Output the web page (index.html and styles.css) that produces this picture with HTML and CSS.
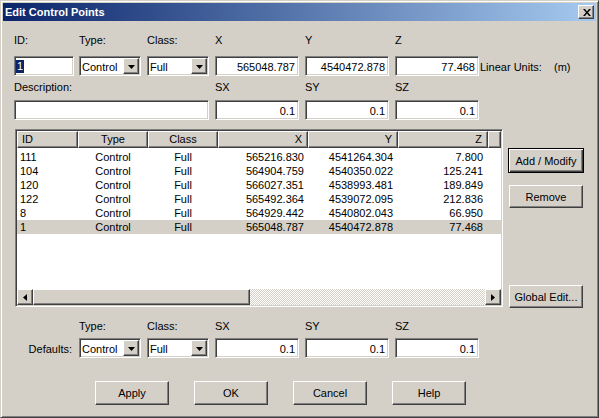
FILE: index.html
```html
<!DOCTYPE html>
<html>
<head>
<meta charset="utf-8">
<title>Edit Control Points</title>
<link rel="stylesheet" href="styles.css">
</head>
<body>
<div class="window">
  <div class="titlebar">
    <span class="title">Edit Control Points</span>
    <div class="close btn"><svg width="8" height="7" viewBox="0 0 8 7"><path d="M0 0h2l2 2.4 2-2.4h2l-3 3.5 3 3.5h-2l-2-2.4-2 2.4h-2l3-3.5z" fill="#000"/></svg></div>
  </div>
  <div class="content">
    <div class="grid form">
      <div class="lbl">ID:</div>
      <div class="lbl">Type:</div>
      <div class="lbl">Class:</div>
      <div class="lbl">X</div>
      <div class="lbl">Y</div>
      <div class="lbl">Z</div>
      <div></div>

      <div class="field w-id"><span class="sel">1</span></div>
      <div class="field combo"><span class="ctext">Control</span><span class="drop btn"><svg width="7" height="4" viewBox="0 0 7 4"><path d="M0 0h7l-3.5 4z" fill="#000"/></svg></span></div>
      <div class="field combo"><span class="ctext">Full</span><span class="drop btn"><svg width="7" height="4" viewBox="0 0 7 4"><path d="M0 0h7l-3.5 4z" fill="#000"/></svg></span></div>
      <div class="field num">565048.787</div>
      <div class="field num">4540472.878</div>
      <div class="field num">77.468</div>
      <div class="units"><span class="ulabel">Linear Units:</span><span>(m)</span></div>

      <div class="lbl lbl2 span3">Description:</div>
      <div class="lbl lbl2">SX</div>
      <div class="lbl lbl2">SY</div>
      <div class="lbl lbl2">SZ</div>
      <div></div>

      <div class="field w-desc span3"></div>
      <div class="field num">0.1</div>
      <div class="field num">0.1</div>
      <div class="field num">0.1</div>
      <div></div>
    </div>

    <div class="middle">
      <div class="list">
        <div class="lhead">
          <div class="hcell c-id">ID</div>
          <div class="hcell c-type">Type</div>
          <div class="hcell c-class">Class</div>
          <div class="hcell c-n">X</div>
          <div class="hcell c-n">Y</div>
          <div class="hcell c-n">Z</div>
          <div class="hcell c-rest"></div>
        </div>
        <div class="rows">
          <div class="row"><span class="c-id">111</span><span class="c-type">Control</span><span class="c-class">Full</span><span class="c-n cx">565216.830</span><span class="c-n">4541264.304</span><span class="c-n">7.800</span></div>
          <div class="row"><span class="c-id">104</span><span class="c-type">Control</span><span class="c-class">Full</span><span class="c-n cx">564904.759</span><span class="c-n">4540350.022</span><span class="c-n">125.241</span></div>
          <div class="row"><span class="c-id">120</span><span class="c-type">Control</span><span class="c-class">Full</span><span class="c-n cx">566027.351</span><span class="c-n">4538993.481</span><span class="c-n">189.849</span></div>
          <div class="row"><span class="c-id">122</span><span class="c-type">Control</span><span class="c-class">Full</span><span class="c-n cx">565492.364</span><span class="c-n">4539072.095</span><span class="c-n">212.836</span></div>
          <div class="row"><span class="c-id">8</span><span class="c-type">Control</span><span class="c-class">Full</span><span class="c-n cx">564929.442</span><span class="c-n">4540802.043</span><span class="c-n">66.950</span></div>
          <div class="row selected"><span class="c-id">1</span><span class="c-type">Control</span><span class="c-class">Full</span><span class="c-n cx">565048.787</span><span class="c-n">4540472.878</span><span class="c-n">77.468</span></div>
        </div>
        <div class="hscroll">
          <div class="arrow btn"><svg width="4" height="7" viewBox="0 0 4 7"><path d="M4 0v7l-4-3.5z" fill="#000"/></svg></div>
          <div class="thumb btn"></div>
          <div class="track"></div>
          <div class="arrow btn"><svg width="4" height="7" viewBox="0 0 4 7"><path d="M0 0v7l4-3.5z" fill="#000"/></svg></div>
        </div>
      </div>
      <div class="side">
        <div class="btn pbtn default">Add / Modify</div>
        <div class="btn pbtn side-btn remove">Remove</div>
        <div class="btn pbtn side-btn global">Global Edit...</div>
      </div>
    </div>

    <div class="grid defaults">
      <div></div>
      <div class="lbl">Type:</div>
      <div class="lbl">Class:</div>
      <div class="lbl">SX</div>
      <div class="lbl">SY</div>
      <div class="lbl">SZ</div>
      <div></div>

      <div class="dlabel">Defaults:</div>
      <div class="field combo"><span class="ctext">Control</span><span class="drop btn"><svg width="7" height="4" viewBox="0 0 7 4"><path d="M0 0h7l-3.5 4z" fill="#000"/></svg></span></div>
      <div class="field combo"><span class="ctext">Full</span><span class="drop btn"><svg width="7" height="4" viewBox="0 0 7 4"><path d="M0 0h7l-3.5 4z" fill="#000"/></svg></span></div>
      <div class="field num">0.1</div>
      <div class="field num">0.1</div>
      <div class="field num">0.1</div>
      <div></div>
    </div>

    <div class="actions">
      <div class="btn pbtn act">Apply</div>
      <div class="btn pbtn act">OK</div>
      <div class="btn pbtn act">Cancel</div>
      <div class="btn pbtn act">Help</div>
    </div>
  </div>
</div>
</body>
</html>
```

FILE: styles.css
```css
* { box-sizing: border-box; }

body {
  margin: 0;
  font: 11px "Liberation Sans", Arial, sans-serif;
  color: #000;
  background: #D4D0C8;
}

.window {
  width: 599px;
  height: 418px;
  border: 1px solid;
  border-color: #D4D0C8 #404040 #404040 #D4D0C8;
  box-shadow: inset 1px 1px #fff, inset -1px -1px #808080;
  padding: 2px;
  background: #D4D0C8;
  display: flex;
  flex-direction: column;
}

.titlebar {
  height: 18px;
  flex: none;
  background: linear-gradient(to right, #0A246A, #A6CAF0);
  display: flex;
  align-items: center;
  justify-content: space-between;
  padding: 0 2px 0 2px;
}

.title {
  color: #fff;
  font-weight: bold;
  line-height: 18px;
}

.btn {
  background: #D4D0C8;
  border: 1px solid;
  border-color: #fff #404040 #404040 #fff;
  box-shadow: inset -1px -1px #808080;
}

.close {
  width: 16px;
  height: 14px;
  display: flex;
  align-items: center;
  justify-content: center;
  padding-left: 1px;
}

.content {
  padding: 13px 0 0 11px;
}

.grid {
  display: grid;
  grid-template-columns: 65px 68px 68px 90px 90px 85px 1fr;
}

.form {
  grid-template-rows: 22px 20px 24px 20px;
}

.lbl {
  line-height: 13px;
  white-space: nowrap;
}

.lbl2 {
  padding-top: 5px;
}

.span3 {
  grid-column: span 3;
}

.field {
  height: 20px;
  background: #fff;
  border: 1px solid;
  border-color: #808080 #fff #fff #808080;
  box-shadow: inset 1px 1px #404040, inset -1px -1px #D4D0C8;
  padding: 2px 3px 0 3px;
  line-height: 16px;
  white-space: nowrap;
  overflow: hidden;
}

.w-id { width: 60px; padding-left: 1px; }
.w-desc { width: 195px; }

.sel {
  display: inline-block;
  background: #0A246A;
  color: #fff;
  line-height: 13px;
  padding: 0 1px 0 1px;
  margin-top: 1px;
  vertical-align: top;
}

.num {
  width: 84px;
  text-align: right;
}

.combo {
  width: 62px;
  display: flex;
  justify-content: space-between;
  padding: 1px 1px 1px 2px;
}

.ctext {
  padding-top: 1px;
  line-height: 16px;
}

.drop {
  width: 16px;
  height: 16px;
  display: flex;
  align-items: center;
  justify-content: center;
  padding-top: 1px;
}

.units {
  line-height: 20px;
  padding-top: 1px;
  white-space: nowrap;
}

.ulabel {
  display: inline-block;
  width: 74px;
}

.middle {
  display: flex;
  margin-top: 9px;
  margin-left: 1px;
}

.list {
  width: 488px;
  height: 178px;
  background: #fff;
  border: 1px solid;
  border-color: #808080 #fff #fff #808080;
  box-shadow: inset 1px 1px #404040, inset -1px -1px #D4D0C8;
  padding: 1px;
  display: flex;
  flex-direction: column;
}

.lhead {
  display: flex;
  height: 17px;
  flex: none;
}

.hcell {
  background: #D4D0C8;
  border-top: 1px solid #fff;
  border-left: 1px solid #fff;
  border-right: 1px solid #404040;
  border-bottom: 1px solid #404040;
  box-shadow: inset -1px -1px #808080;
  line-height: 14px;
  white-space: nowrap;
  overflow: hidden;
}

.c-id { width: 61px; flex: none; padding-left: 3px; }
.c-type { width: 70px; flex: none; text-align: center; }
.c-class { width: 70px; flex: none; text-align: center; }
.c-n { width: 90px; flex: none; text-align: right; padding-right: 5px; }
.cx { padding-right: 4px; }
.c-rest { width: 13px; flex: none; }

.hcell.c-id { padding-left: 4px; }

.rows {
  flex: 1;
  padding-top: 2px;
}

.row {
  display: flex;
  height: 14px;
  line-height: 14px;
  white-space: nowrap;
}

.row.selected {
  background: #D4D0C8;
}

.hscroll {
  display: flex;
  height: 16px;
  flex: none;
}

.arrow {
  width: 16px;
  height: 16px;
  display: flex;
  align-items: center;
  justify-content: center;
}

.thumb {
  width: 217px;
  height: 16px;
}

.track {
  flex: 1;
  background: repeating-conic-gradient(#fff 0 25%, #D4D0C8 0 50%) 0 0 / 2px 2px;
}

.side {
  width: 76px;
  height: 178px;
  margin-left: 5px;
  display: flex;
  flex-direction: column;
  padding-top: 19px;
}

.pbtn {
  display: flex;
  align-items: center;
  justify-content: center;
  white-space: nowrap;
}

.default {
  height: 25px;
  width: 76px;
  border: 1px solid #000;
  box-shadow: inset 1px 1px #fff, inset -1px -1px #404040, inset -2px -2px #808080;
}

.side-btn {
  width: 74px;
  height: 23px;
  margin-left: 1px;
}

.remove { margin-top: 12px; }
.global { margin-top: auto; margin-bottom: -1px; }

.defaults {
  margin-top: 13px;
  grid-template-rows: 18px 20px;
}

.dlabel {
  text-align: right;
  padding-right: 7px;
  line-height: 20px;
  padding-top: 1px;
}

.actions {
  display: flex;
  gap: 25px;
  margin-top: 23px;
  margin-left: 81px;
}

.act {
  width: 74px;
  height: 24px;
}
```
